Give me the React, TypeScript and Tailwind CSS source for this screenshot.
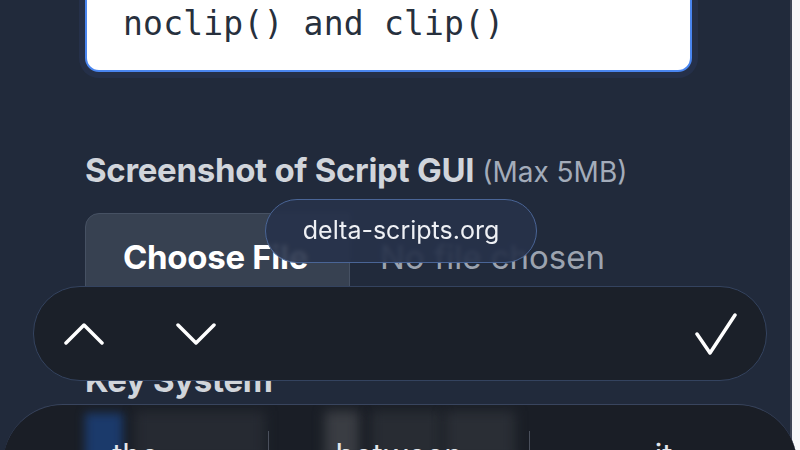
import React from "react";

export default function App() {
  return (
    <div className="relative flex h-[450px] w-[800px] overflow-hidden bg-[#212a3b] font-['Inter','Noto_Sans',sans-serif]">
      <div className="flex-1">
        <div className="ml-[85px] flex w-[607px] flex-col">
          <div className="-mt-[40px] h-[112px] rounded-[14px] border-2 border-[#4a86f0] bg-white pl-[36px] pt-[42px] shadow-[0_0_0_6px_#253049]">
            <span className="font-['DejaVu_Sans_Mono',monospace] text-[33px] leading-[40px] tracking-[0.2px] text-[#27303d]">
              noclip() and clip()
            </span>
          </div>
          <div className="mt-[78px] flex items-baseline gap-[8px] leading-[40px]">
            <span className="text-[33px] font-bold tracking-[-0.3px] text-[#d1d5db]">Screenshot of Script GUI</span>
            <span className="text-[28px] text-[#a3acba]">(Max 5MB)</span>
          </div>
          <div className="mt-[21px] flex h-[90px] items-stretch">
            <div className="flex w-[265px] items-center rounded-tl-[14px] border border-[#465163] bg-[#374151] pl-[37px] text-[33px] font-bold tracking-[-0.3px] text-white">
              Choose File
            </div>
            <div className="flex items-center pl-[30px] text-[33px] text-[#9ca3af]">No file chosen</div>
          </div>
          <div className="mt-[57px] text-[33px] font-bold leading-[40px] tracking-[-0.3px] text-[#d1d5db]">Key System</div>
        </div>
      </div>
      <div className="w-[10px] border-l-2 border-[#3d4656] bg-[#f7f8fa]" />

      {/* URL tooltip */}
      <div className="absolute left-[265px] top-[199px] flex h-[64px] w-[272px] items-center justify-center rounded-full border-[1.5px] border-[#4a6596] bg-[#27324a]/90 text-[25px] text-[#eef0f4] backdrop-blur-[2px]">
        delta-scripts.org
      </div>

      {/* Keyboard accessory toolbar */}
      <div className="absolute left-[33px] top-[286px] flex h-[95px] w-[734px] items-center rounded-[47px] border border-[#34435f] bg-[#1b2029] px-[30px]">
        <svg width="40" height="24" viewBox="0 0 40 24">
          <path d="M2 21 L20 3 L38 21" fill="none" stroke="white" strokeWidth="3.5" strokeLinecap="round" strokeLinejoin="round" />
        </svg>
        <svg width="40" height="24" viewBox="0 0 40 24" className="ml-[72px]">
          <path d="M2 3 L20 21 L38 3" fill="none" stroke="white" strokeWidth="3.5" strokeLinecap="round" strokeLinejoin="round" />
        </svg>
        <svg width="44" height="42" viewBox="0 0 44 42" className="ml-auto mr-[-2px]">
          <path d="M3 21 L16 40 L41 2" fill="none" stroke="white" strokeWidth="3.5" strokeLinecap="round" strokeLinejoin="round" />
        </svg>
      </div>

      {/* Keyboard suggestion bar */}
      <div className="absolute left-[3px] top-[404px] h-[80px] w-[794px] overflow-hidden rounded-t-[60px] border-t border-[#39455e] bg-[#1a1e26]">
        <div className="absolute left-[82px] top-[8px] h-[50px] w-[38px] bg-[#1b3a6b] blur-[5px]" />
        <div className="absolute left-[132px] top-[6px] h-[50px] w-[130px] bg-[#262a32] blur-[6px]" />
        <div className="absolute left-[322px] top-[6px] h-[50px] w-[34px] bg-[#3a3d43] blur-[6px]" />
        <div className="absolute left-[368px] top-[6px] h-[50px] w-[70px] bg-[#282c33] blur-[6px]" />
        <div className="absolute left-[442px] top-[6px] h-[50px] w-[70px] bg-[#2a2e35] blur-[6px]" />
        <div className="absolute inset-x-0 top-[26px] flex">
          <div className="flex w-[265px] justify-center pt-[6px] text-[31px] leading-[36px] text-[#e3e6eb]">the</div>
          <div className="h-[60px] w-px bg-[#4a505c]" />
          <div className="flex w-[260px] justify-center pt-[6px] text-[31px] leading-[36px] text-[#e3e6eb]">between</div>
          <div className="h-[60px] w-px bg-[#4a505c]" />
          <div className="flex flex-1 justify-center pt-[6px] text-[31px] leading-[36px] text-[#e3e6eb]">it</div>
        </div>
      </div>
    </div>
  );
}
